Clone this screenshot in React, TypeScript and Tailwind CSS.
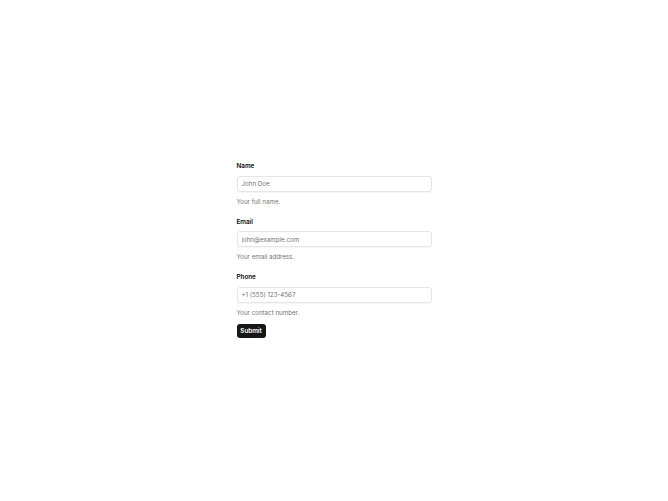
export default function App() {
  const fields = [
    { label: "Name", placeholder: "John Doe", hint: "Your full name." },
    { label: "Email", placeholder: "john@example.com", hint: "Your email address." },
    { label: "Phone", placeholder: "+1 (555) 123-4567", hint: "Your contact number." },
  ];

  return (
    <div className="min-h-screen bg-white flex items-center justify-center antialiased font-['Inter',sans-serif]">
      <form className="w-[195px] flex flex-col gap-[14px]">
        {fields.map((f) => (
          <div key={f.label} className="flex flex-col">
            <label className="text-[6.3px] leading-[7px] font-semibold text-neutral-950">{f.label}</label>
            <input
              placeholder={f.placeholder}
              className="mt-[5.5px] h-[16px] w-full rounded-[3px] border border-neutral-200 bg-white px-[4px] text-[6.2px] text-neutral-900 placeholder:text-neutral-500 shadow-[0_1px_1px_rgba(0,0,0,0.04)] outline-none"
            />
            <p className="mt-[6px] text-[6.2px] leading-[7px] text-neutral-500">{f.hint}</p>
          </div>
        ))}
        <div className="-mt-[6px] flex">
          <button
            type="button"
            className="h-[14px] w-[29px] rounded-[3px] bg-neutral-900 text-[6.3px] leading-none font-semibold text-white"
          >
            Submit
          </button>
        </div>
      </form>
    </div>
  );
}
